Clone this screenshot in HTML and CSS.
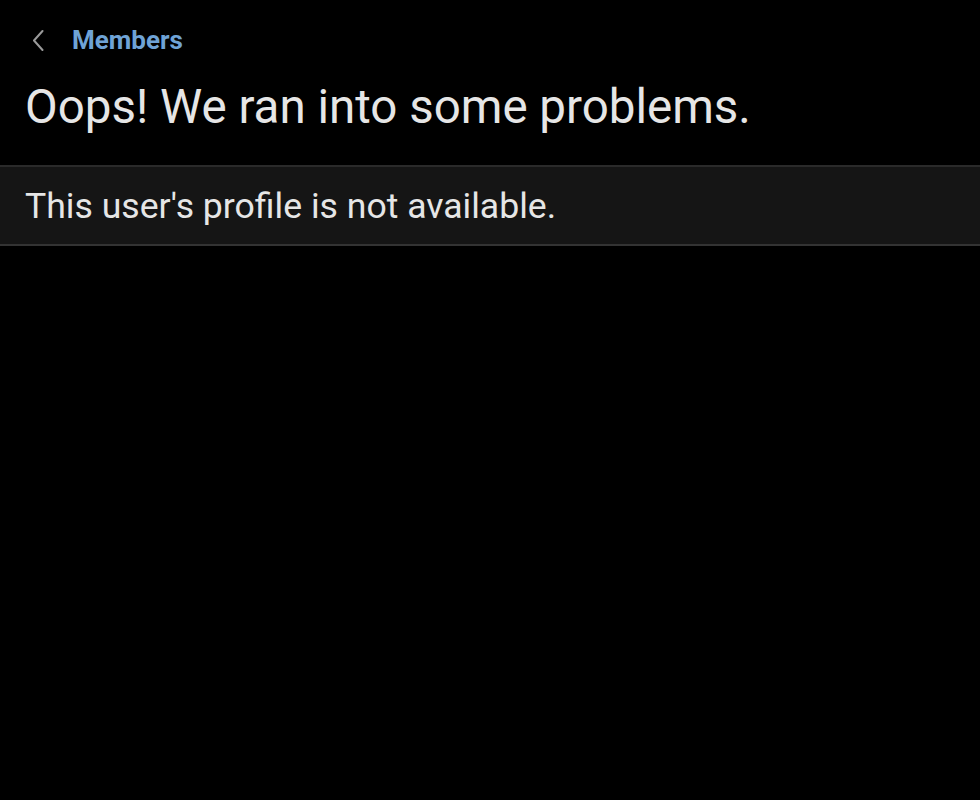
FILE: index.html
```html
<!DOCTYPE html>
<html lang="en">
<head>
    <meta charset="UTF-8">
    <meta name="viewport" content="width=device-width, initial-scale=1.0">
    <title>Members</title>
    <link rel="stylesheet" href="styles.css">
</head>
<body>
    <header class="topbar">
        <a href="#" class="back">
            <svg class="back-icon" width="14" height="22" viewBox="0 0 14 22">
                <path d="M11.5 2 L3 11.5 L11.5 21" fill="none" stroke="#9a9a9a" stroke-width="2" stroke-linecap="round" stroke-linejoin="round"/>
            </svg>
            <span class="back-label">Members</span>
        </a>
    </header>

    <h1 class="title">Oops! We ran into some problems.</h1>

    <div class="notice">
        <p>This user's profile is not available.</p>
    </div>
</body>
</html>
```

FILE: styles.css
```css
* {
    margin: 0;
    padding: 0;
    box-sizing: border-box;
}

body {
    font-family: 'Roboto', 'Liberation Sans', sans-serif;
    background-color: #000;
    color: #e6e6e6;
}

.topbar {
    height: 79px;
    display: flex;
    align-items: center;
    padding: 0 0 0 31px;
}

.back {
    display: flex;
    align-items: center;
    gap: 27px;
    text-decoration: none;
}

.back-label {
    color: #6fa3d6;
    font-size: 26px;
    font-weight: 700;
}

.title {
    font-size: 47.5px;
    font-weight: 400;
    padding: 0 25px;
    line-height: 56px;
    height: 86px;
}

.notice {
    background-color: #151515;
    border-top: 2px solid #2a2a2a;
    border-bottom: 2px solid #333;
    height: 81px;
    display: flex;
    align-items: center;
    padding: 0 25px;
}

.notice p {
    font-size: 35.6px;
}
```
